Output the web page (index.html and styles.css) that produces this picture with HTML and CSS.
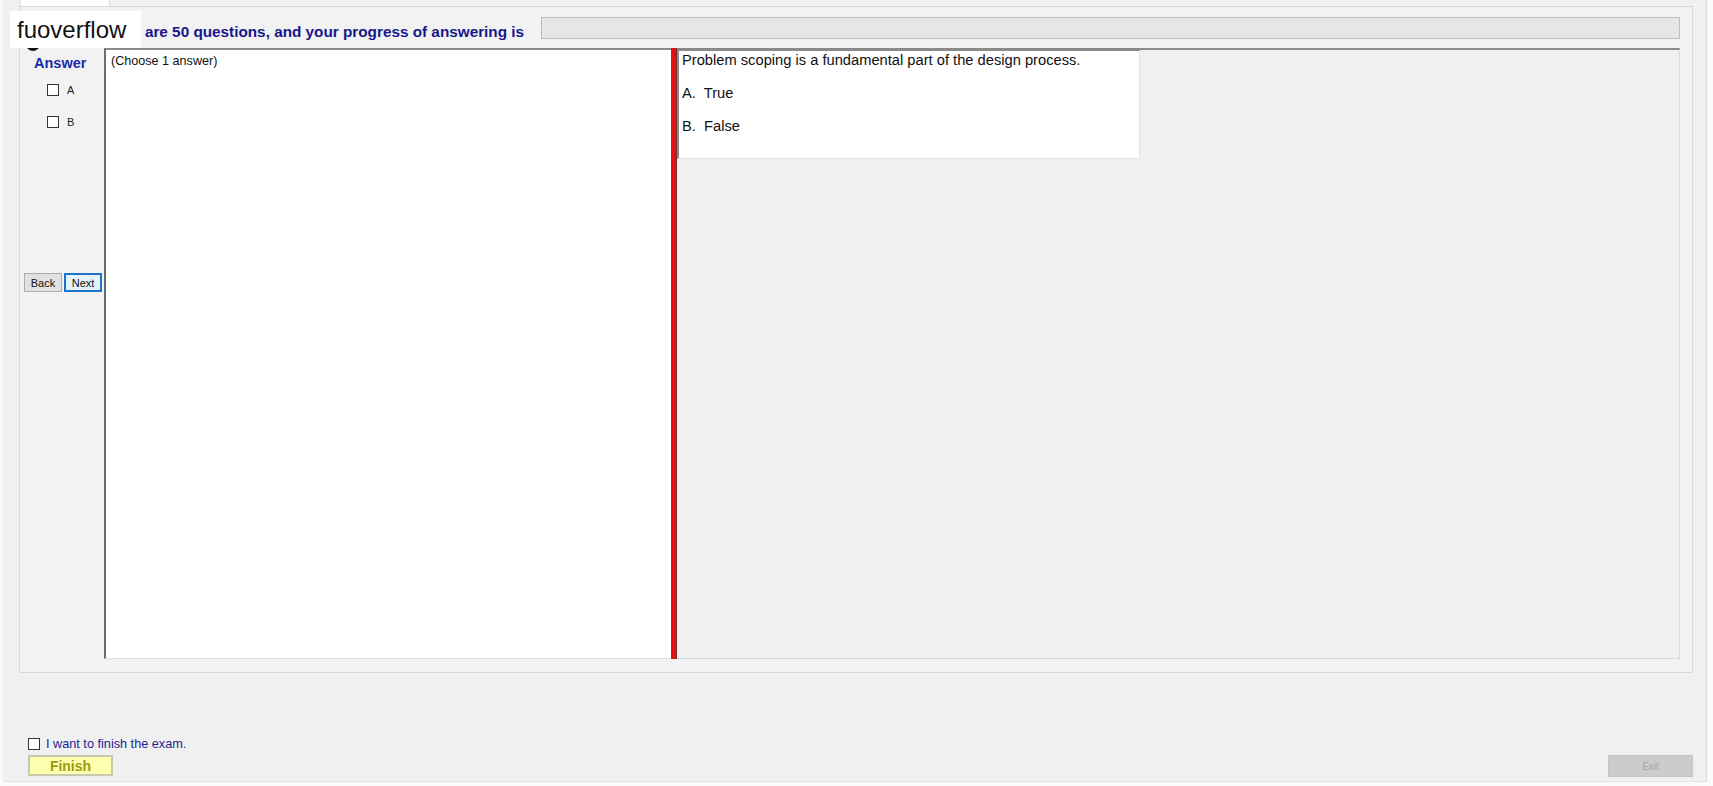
FILE: index.html
```html
<!DOCTYPE html>
<html>
<head>
<meta charset="utf-8">
<link rel="stylesheet" href="styles.css">
</head>
<body>
<div class="window">
  <div class="tabs"><div class="tab"></div></div>
  <div class="tabpage">
    <div class="header">
      <span class="dot"></span>
      <span class="title">There are 50 questions, and your progress of answering is</span>
      <div class="progress"></div>
    </div>
    <div class="content">
      <div class="leftcol">
        <div class="answer">Answer</div>
        <div class="opt opt-a"><span class="cb"></span><span class="lbl">A</span></div>
        <div class="opt opt-b"><span class="cb"></span><span class="lbl">B</span></div>
        <div class="navs">
          <button class="btn back">Back</button>
          <button class="btn next">Next</button>
        </div>
      </div>
      <div class="whitepanel"><div class="choose">(Choose 1 answer)</div></div>
      <div class="splitter"></div>
      <div class="rightarea">
        <div class="qbox">
          <div class="qtext">Problem scoping is a fundamental part of the design process.</div>
          <div class="qopt">A.  True</div>
          <div class="qopt">B.  False</div>
        </div>
      </div>
    </div>
  </div>
  <div class="footer">
    <div class="confirm"><span class="cb2"></span><span class="ctext">I want to finish the exam.</span></div>
    <div class="btnrow">
      <button class="finish">Finish</button>
      <button class="exit">Exit</button>
    </div>
  </div>
  <div class="brand">fuoverflow</div>
</div>
</body>
</html>
```

FILE: styles.css
```css
* { box-sizing: border-box; }
body {
  margin: 0;
  background: #fafafa;
  font-family: "Liberation Sans", Arial, sans-serif;
}
.window {
  position: relative;
  margin-left: 3px;
  width: 1704px;
  height: 782px;
  background: #f0f0f0;
  border-right: 1px solid #dcdcdc;
  border-bottom: 1px solid #e2e2e2;
  display: flex;
  flex-direction: column;
}
.tabs {
  height: 6px;
  padding-left: 17px;
}
.tab {
  width: 90px;
  height: 6px;
  background: #fff;
  border-left: 1px solid #d9d9d9;
  border-right: 1px solid #d9d9d9;
}
.tabpage {
  margin-left: 16px;
  width: 1674px;
  height: 667px;
  border: 1px solid #d9d9d9;
  background: #f2f2f2;
  padding: 0 12px 13px 4px;
  display: flex;
  flex-direction: column;
}
.header {
  position: relative;
  height: 41px;
  display: flex;
  align-items: flex-start;
}
.dot {
  position: absolute;
  left: 2px;
  top: 30px;
  width: 14px;
  height: 14px;
  border-radius: 50%;
  background: #111;
}
.title {
  margin-left: 75px;
  margin-top: 16px;
  line-height: 18px;
  font-size: 15.3px;
  font-weight: bold;
  color: #17178c;
  white-space: nowrap;
}
.progress {
  margin-left: auto;
  margin-top: 10px;
  width: 1139px;
  height: 22px;
  background: #e6e6e6;
  border: 1px solid #bcbcbc;
}
.content {
  display: flex;
  height: 611px;
}
.leftcol {
  width: 80px;
  display: flex;
  flex-direction: column;
}
.answer {
  margin-top: 6px;
  margin-left: 10px;
  line-height: 18px;
  font-size: 14.5px;
  font-weight: bold;
  color: #1a2aa8;
}
.opt {
  display: flex;
  align-items: center;
  margin-left: 23px;
  height: 12px;
  font-size: 11px;
  color: #222;
}
.opt-a { margin-top: 12px; }
.opt-b { margin-top: 20px; }
.cb {
  width: 12px;
  height: 12px;
  background: #fff;
  border: 1px solid #333;
}
.lbl { margin-left: 8px; }
.navs {
  margin-top: 145px;
  display: flex;
  gap: 2px;
}
.btn {
  height: 19px;
  padding: 0;
  font-family: "Liberation Sans", Arial, sans-serif;
  font-size: 11px;
  color: #111;
  background: #e1e1e1;
  border: 1px solid #adadad;
}
.back { width: 38px; }
.next { width: 38px; border: 2px solid #1b74c8; background: #e5f1fb; }
.whitepanel {
  width: 567px;
  background: #fff;
  border-left: 2px solid #6e6e6e;
  border-top: 2px solid #8a8a8a;
  border-bottom: 1px solid #e0e0e0;
}
.choose {
  margin-top: 4px;
  margin-left: 5px;
  font-size: 12.6px;
  line-height: 15px;
  color: #111;
}
.splitter {
  width: 6px;
  background: #e01212;
  border-right: 1px solid #7a2a2a;
}
.rightarea {
  flex: 1;
  background: #f0f0f0;
  border-top: 2px solid #8a8a8a;
  border-right: 1px solid #d8d8d8;
  border-bottom: 1px solid #d8d8d8;
}
.qbox {
  width: 463px;
  height: 109px;
  background: #fff;
  border-left: 2px solid #8a8a8a;
  border-top: 1px solid #8a8a8a;
  border-right: 1px solid #e2e2e2;
  border-bottom: 1px solid #e2e2e2;
  padding-left: 3px;
  padding-top: 1px;
}
.qtext {
  font-size: 14.7px;
  line-height: 17px;
  color: #111;
}
.qopt {
  margin-top: 16px;
  font-size: 14.7px;
  line-height: 17px;
  color: #111;
  white-space: pre;
}
.footer {
  margin-top: 64px;
  padding: 0 13px 0 25px;
  display: flex;
  flex-direction: column;
}
.confirm {
  display: flex;
  align-items: center;
  height: 13px;
}
.cb2 {
  width: 12px;
  height: 12px;
  background: #fff;
  border: 1px solid #333;
}
.ctext {
  margin-left: 6px;
  font-size: 12.7px;
  color: #1e1e8e;
}
.btnrow {
  margin-top: 5px;
  display: flex;
  justify-content: space-between;
}
.finish {
  width: 85px;
  height: 21px;
  padding: 0;
  background: #ffffb0;
  border: 2px solid #c8c8b0;
  font-family: "Liberation Sans", Arial, sans-serif;
  font-size: 14px;
  font-weight: bold;
  color: #9a9a10;
}
.exit {
  width: 85px;
  height: 22px;
  padding: 0;
  background: #cccccc;
  border: 1px solid #c4c4c4;
  font-family: "Liberation Sans", Arial, sans-serif;
  font-size: 10px;
  color: #a6a6a6;
}
.brand {
  position: absolute;
  left: 7px;
  top: 11px;
  width: 131px;
  height: 37px;
  background: #fff;
  font-size: 24px;
  line-height: 37px;
  padding-left: 7px;
  color: #111;
}
```
